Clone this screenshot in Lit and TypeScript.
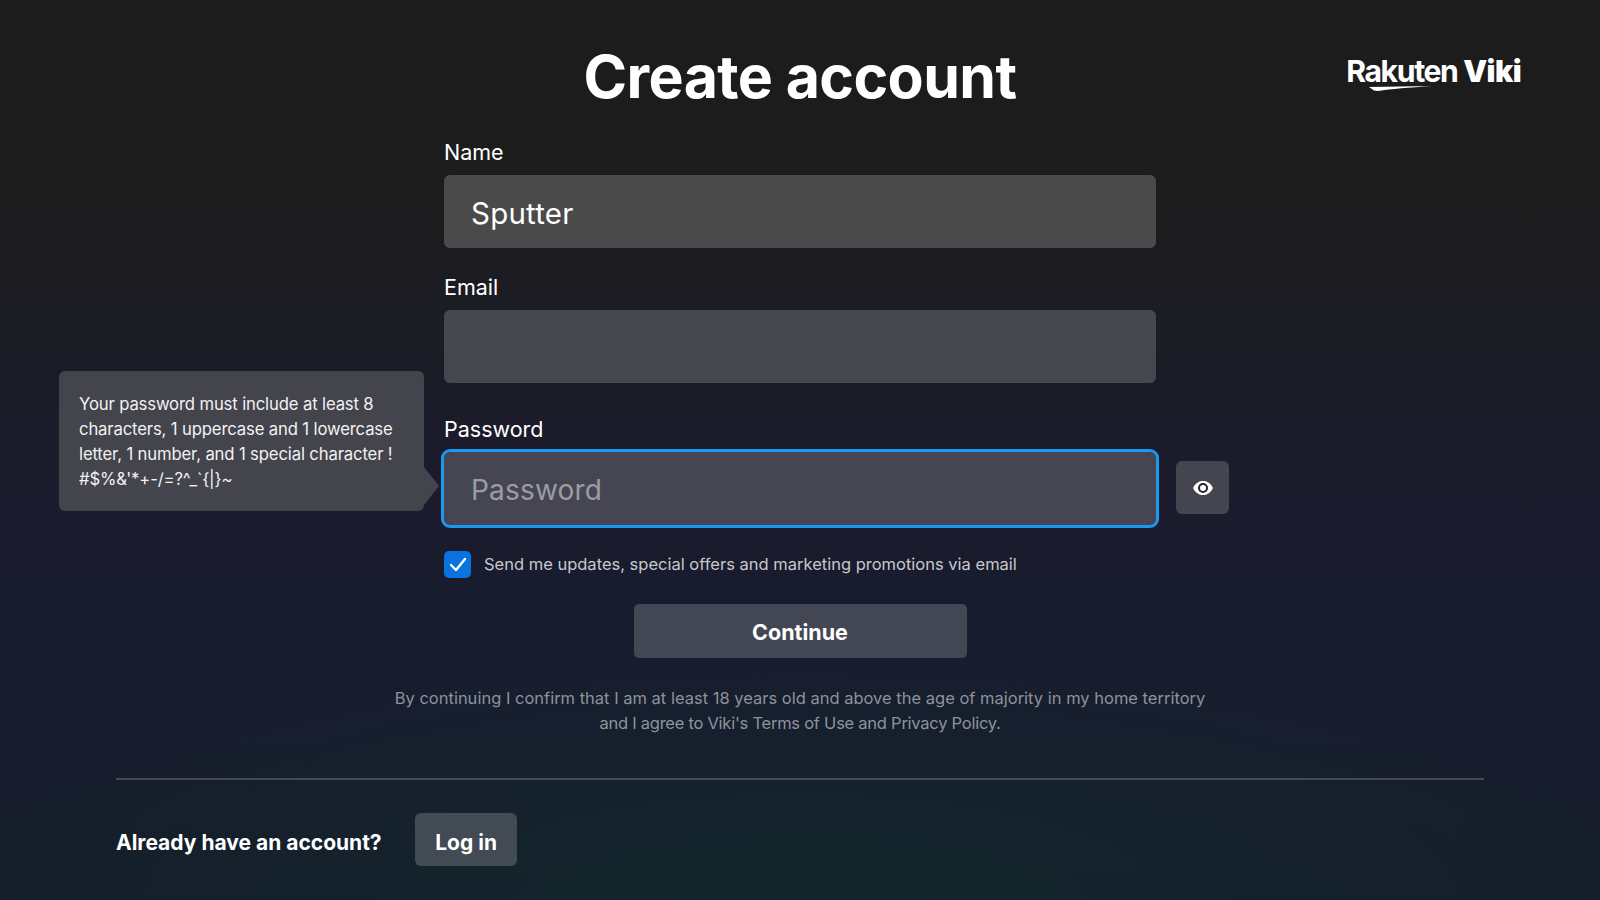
import { LitElement, html, css } from "lit";
import { customElement } from "lit/decorators.js";

@customElement("app-root")
export class AppRoot extends LitElement {
  static styles = css`
    :host {
      display: block;
      width: 1600px;
      height: 900px;
      overflow: hidden;
      font-family: Inter, "Noto Sans", sans-serif;
      color: #fff;
    }
    .page {
      width: 1600px;
      height: 900px;
      box-sizing: border-box;
      padding-top: 44px;
      background:
        radial-gradient(900px 260px at 50% 100%, rgba(16, 46, 44, 0.55), rgba(16, 46, 44, 0) 100%),
        linear-gradient(180deg, #1c1c1c 0%, #1c1c1c 20%, #1b1b2b 50%, #181c2f 70%, #161d2b 100%);
    }
    .head {
      display: grid;
      grid-template-columns: 1fr auto 1fr;
      height: 64px;
      align-items: center;
    }
    h1 {
      grid-column: 2;
      margin: 0;
      padding-top: 1px;
      font-size: 59px;
      line-height: 64px;
      font-weight: 700;
      letter-spacing: -0.6px;
    }
    .logo {
      grid-column: 3;
      justify-self: end;
      margin-right: 79px;
      margin-top: -11px;
      position: relative;
      font-size: 30.2px;
      line-height: 36px;
      letter-spacing: -1.4px;
      white-space: nowrap;
      font-weight: 700;
    }
    .logo b { font-weight: 900; letter-spacing: -0.6px; }
    .logo svg { position: absolute; left: 23px; top: 33px; }
    .form {
      display: grid;
      grid-template-columns: 1fr 712px 1fr;
      margin-top: 30px;
      position: relative;
    }
    .field { grid-column: 2; }
    label {
      display: block;
      font-size: 21.5px;
      line-height: 28px;
      font-weight: 400;
      margin-bottom: 9px;
    }
    .box {
      height: 73px;
      box-sizing: border-box;
      border-radius: 6px;
      background: #4a4a4a;
      display: flex;
      align-items: center;
      padding: 2px 0 0 27px;
      font-size: 29.5px;
      font-weight: 400;
      letter-spacing: 0.2px;
    }
    .email { margin-top: 25px; }
    .email .box { background: #47474e; }
    .pw { margin-top: 32px; }
    .pw .box {
      background: #464652;
      outline: 3px solid #1a98f2;
      color: #9c9ca4;
      border-radius: 6px;
      font-size: 28px;
    }
    .eye {
      grid-column: 3;
      align-self: end;
      margin: 0 0 11px 20px;
      width: 53px;
      height: 53px;
      border-radius: 6px;
      background: #45454f;
      display: flex;
      align-items: center;
      justify-content: center;
    }
    .tip {
      position: absolute;
      left: 59px;
      top: 233px;
      width: 365px;
      height: 140px;
      box-sizing: border-box;
      padding: 21px 20px;
      background: #44444c;
      border-radius: 6px;
      font-size: 16.7px;
      line-height: 25px;
      letter-spacing: -0.15px;
      color: #f2f2f2;
    }
    .tip::after {
      content: "";
      position: absolute;
      right: -15px;
      top: 96px;
      border-left: 15px solid #44444c;
      border-top: 19px solid transparent;
      border-bottom: 19px solid transparent;
    }
    .consent {
      width: 712px;
      height: 27px;
      margin: 26px auto 0;
      display: flex;
      align-items: center;
      gap: 13px;
      font-size: 16.5px;
      line-height: 25px;
      color: #c8c8cc;
    }
    .check {
      width: 27px;
      height: 27px;
      border-radius: 5px;
      background: #0b73e0;
      display: flex;
      align-items: center;
      justify-content: center;
    }
    .cont {
      width: 333px;
      height: 54px;
      box-sizing: border-box;
      padding-top: 2px;
      margin: 26px auto 0;
      border-radius: 5px;
      background: #434753;
      display: flex;
      align-items: center;
      justify-content: center;
      font-size: 21.5px;
      font-weight: 700;
    }
    .legal {
      margin: 28px 0 0;
      text-align: center;
      font-size: 16.5px;
      line-height: 25px;
      color: #8e929c;
    }
    .legal .l2 { letter-spacing: -0.25px; }
    hr {
      width: 1368px;
      margin: 42px auto 0;
      border: 0;
      border-top: 2px solid #454a55;
    }
    .foot {
      margin: 33px 0 0 116px;
      display: flex;
      align-items: center;
      gap: 33px;
      font-size: 21px;
      font-weight: 700;
    }
    .foot span { padding-top: 5px; }
    .login {
      width: 102px;
      height: 53px;
      box-sizing: border-box;
      padding: 5px 0 0 1px;
      border-radius: 6px;
      background: #424a53;
      display: flex;
      align-items: center;
      justify-content: center;
      font-size: 21px;
    }
  `;

  render() {
    return html`
      <div class="page">
        <div class="head">
          <h1>Create account</h1>
          <div class="logo">
            Rakuten <b>Viki</b>
            <svg width="64" height="6" viewBox="0 0 64 6"><path d="M0 1 L63 0 C40 1.5 22 3 9 5 L5 4.5 Z" fill="#fff" /></svg>
          </div>
        </div>
        <div class="form">
          <div class="field"><label>Name</label><div class="box">Sputter</div></div>
          <div class="field email"><label>Email</label><div class="box"></div></div>
          <div class="field pw"><label>Password</label><div class="box">Password</div></div>
          <div class="eye">
            <svg width="22" height="16" viewBox="0 0 22 16">
              <path d="M1 8 C4 2.5 7.5 1 11 1 C14.5 1 18 2.5 21 8 C18 13.5 14.5 15 11 15 C7.5 15 4 13.5 1 8 Z" fill="#fff" />
              <circle cx="11" cy="8" r="4" fill="none" stroke="#23232e" stroke-width="2" />
            </svg>
          </div>
          <div class="tip">Your password must include at least 8 characters, 1 uppercase and 1 lowercase letter, 1 number, and 1 special character ! #$%&'*+-/=?^_\`{|}~</div>
        </div>
        <div class="consent">
          <div class="check">
            <svg width="18" height="15" viewBox="0 0 18 15"><path d="M2 8 L7 13 L16 2" fill="none" stroke="#fff" stroke-width="2.4" stroke-linecap="round" stroke-linejoin="round" /></svg>
          </div>
          <span>Send me updates, special offers and marketing promotions via email</span>
        </div>
        <div class="cont">Continue</div>
        <p class="legal">By continuing I confirm that I am at least 18 years old and above the age of majority in my home territory<br /><span class="l2">and I agree to Viki's Terms of Use and Privacy Policy.</span></p>
        <hr />
        <div class="foot"><span>Already have an account?</span><div class="login">Log in</div></div>
      </div>
    `;
  }
}
